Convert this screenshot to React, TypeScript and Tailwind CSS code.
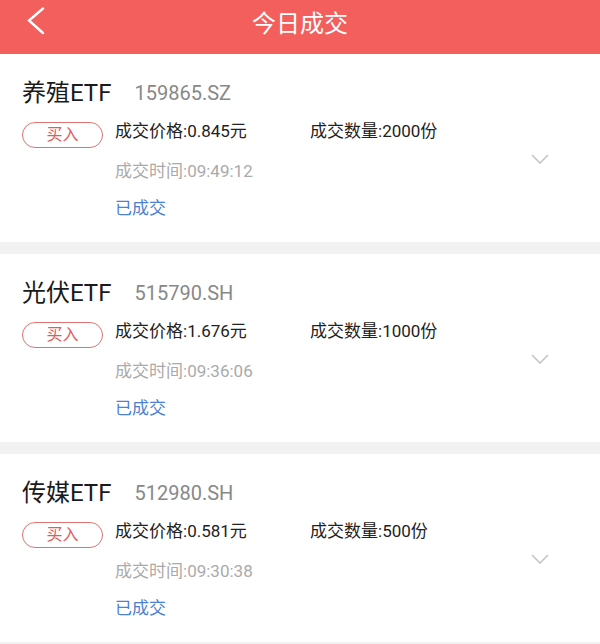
const trades = [
  { name: "养殖ETF", code: "159865.SZ", price: "0.845", qty: "2000", time: "09:49:12" },
  { name: "光伏ETF", code: "515790.SH", price: "1.676", qty: "1000", time: "09:36:06" },
  { name: "传媒ETF", code: "512980.SH", price: "0.581", qty: "500", time: "09:30:38" },
];

function TradeCard({ t }: { t: (typeof trades)[number] }) {
  return (
    <div className="bg-white px-[22px] pt-[25px] pb-[16px]">
      <div className="flex h-[28px] items-center">
        <span className="text-[24px] leading-none text-[#1a1a1a]">{t.name}</span>
        <span className="ml-[23px] text-[20px] leading-none text-[#888]">{t.code}</span>
      </div>

      <div className="mt-[5px] flex">
        <div className="flex-1">
          <div className="flex h-[40px] items-center">
            <div className="mt-[5px] flex h-[26px] w-[81px] items-center justify-center rounded-full border border-[#e07272] text-[16px] text-[#e05a5a]">
              买入
            </div>
            <span className="ml-[12px] w-[195px] text-[17px] text-[#222]">成交价格:{t.price}元</span>
            <span className="text-[17px] text-[#222]">成交数量:{t.qty}份</span>
          </div>
          <div className="flex h-[40px] items-center pl-[93px] text-[17px] text-[#aaa]">
            成交时间:{t.time}
          </div>
          <div className="flex h-[34px] items-center pl-[93px] text-[17px] text-[#4d7fd2]">
            已成交
          </div>
        </div>
        <div className="flex w-[76px] items-center justify-center pb-[20px]">
          <svg width="18" height="10" viewBox="0 0 18 10" fill="none">
            <path d="M1 1L9 9L17 1" stroke="#c4c4c4" strokeWidth="1.6" />
          </svg>
        </div>
      </div>
    </div>
  );
}

export default function App() {
  return (
    <div className="min-h-screen bg-[#f2f2f2] font-['Roboto','Noto_Sans_CJK_SC',sans-serif]">
      {/* Header */}
      <div className="relative flex h-[54px] items-center justify-center bg-[#f35f5d] pb-[6px]">
        <div className="absolute left-[27px] top-[7px]">
          <svg width="18" height="28" viewBox="0 0 18 28" fill="none">
            <path d="M16 1.5L2 13.5L16 26" stroke="white" strokeWidth="2.4" strokeLinecap="round" />
          </svg>
        </div>
        <span className="text-[24px] text-white">今日成交</span>
      </div>

      <div className="flex flex-col gap-[12px]">
        {trades.map((t, i) => (
          <TradeCard key={i} t={t} />
        ))}
      </div>
    </div>
  );
}
